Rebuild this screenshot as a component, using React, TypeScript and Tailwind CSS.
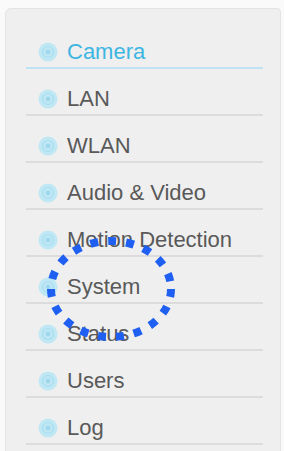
import React from "react";

const items = ["Camera", "LAN", "WLAN", "Audio & Video", "Motion Detection", "System", "Status", "Users", "Log"];

function Dot() {
  return (
    <svg width="20" height="20" viewBox="0 0 20 20" className="shrink-0">
      <circle cx="10" cy="10" r="9.5" fill="#bfe8f4" />
      <circle cx="10" cy="10" r="5.5" fill="none" stroke="#a6dcef" strokeWidth="1.2" />
      <circle cx="10" cy="10" r="2.4" fill="#9fd8ee" />
    </svg>
  );
}

export default function App() {
  return (
    <div className="w-[284px] h-[451px] bg-[#fafafa] pt-[8px] pl-[5px] pr-[3px] overflow-hidden" style={{ fontFamily: "'Liberation Sans', Arial, sans-serif" }}>
      <div className="relative h-[460px] bg-[#efefef] rounded-tl-[6px] rounded-tr-[4px] border border-[#e4e4e4] pt-[13px] pl-[20px] pr-[17px]">
        <div className="flex flex-col">
          {items.map((it, i) => (
            <div
              key={it}
              className={`flex items-end gap-[9px] h-[47px] pb-[4px] pl-[12px] border-b-2 ${i === 0 ? "border-[#bfe3f3]" : "border-[#dcdcdc]"}`}
            >
              <div className="pb-[1px]"><Dot /></div>
              <span className={`text-[22px] leading-[22px] ${i === 0 ? "text-[#3db6e2]" : "text-[#595959]"}`}>{it}</span>
            </div>
          ))}
        </div>
        <svg className="absolute left-[40px] top-[227px]" width="130" height="106" viewBox="0 0 130 106">
          <ellipse cx="65" cy="53" rx="60" ry="48" fill="none" stroke="#1f5ff2" strokeWidth="8" strokeDasharray="8 10" />
        </svg>
      </div>
    </div>
  );
}
